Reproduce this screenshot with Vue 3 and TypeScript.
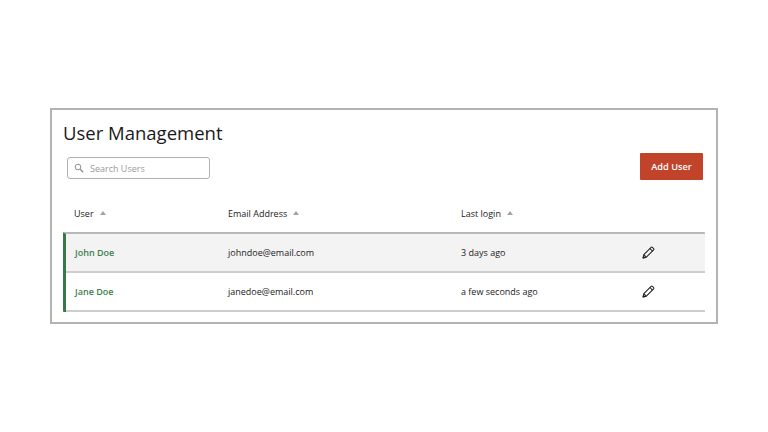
<script setup lang="ts">
interface User { name: string; email: string; login: string }
const users: User[] = [
  { name: 'John Doe', email: 'johndoe@email.com', login: '3 days ago' },
  { name: 'Jane Doe', email: 'janedoe@email.com', login: 'a few seconds ago' },
]
const headers = [
  { label: 'User', cls: 'first' },
  { label: 'Email Address', cls: '' },
  { label: 'Last login', cls: '' },
]
</script>

<template>
  <div class="page">
    <section class="card">
      <h1 class="title">User Management</h1>
      <div class="toolbar">
        <label class="search">
          <svg class="search-icon" viewBox="0 0 12 12" width="10" height="10" fill="none" stroke="#8f8f8f" stroke-width="1.2">
            <circle cx="4.8" cy="4.8" r="3.4" />
            <path d="M7.4 7.4 11 11" stroke-width="1.6" />
          </svg>
          <span class="placeholder">Search Users</span>
        </label>
        <button class="add" type="button">Add User</button>
      </div>
      <div class="grid head">
        <div v-for="h in headers" :key="h.label" class="th" :class="h.cls">
          {{ h.label }}<span class="caret"></span>
        </div>
        <div></div>
      </div>
      <div class="rows">
        <div v-for="(u, i) in users" :key="u.email" class="grid row" :class="{ shaded: i === 0 }">
          <div class="name">{{ u.name }}</div>
          <div>{{ u.email }}</div>
          <div>{{ u.login }}</div>
          <div class="action">
            <svg viewBox="0 0 14 14" width="13" height="13" fill="none" stroke="#1f1f1f" stroke-width="1.1" stroke-linejoin="round">
              <path d="M1.2 12.8 2 9.3 9.8 1.5a1 1 0 0 1 1.4 0l1.3 1.3a1 1 0 0 1 0 1.4L4.7 12Z" />
              <path d="M8.6 2.7 11.3 5.4" />
              <path d="M2 9.3 4.7 12" />
              <path d="M1.2 12.8 2.9 12.4 1.6 11.1Z" fill="#1f1f1f" />
            </svg>
          </div>
        </div>
      </div>
    </section>
  </div>
</template>

<style>
html, body { margin: 0; background: #fff; }
</style>

<style scoped>
.page {
  width: 768px;
  height: 432px;
  box-sizing: border-box;
  padding: 108px 50px 0;
  font-family: "Open Sans", "Noto Sans", sans-serif;
  color: #222;
  overflow: hidden;
}
.card {
  box-sizing: border-box;
  width: 668px;
  height: 216px;
  border: 2px solid #b4b4b4;
  padding: 9px 11px 0;
  background: #fff;
}
.title {
  margin: 0;
  font-size: 18.5px;
  line-height: 27px;
  font-weight: 400;
  color: #1a1a1a;
}
.toolbar {
  display: flex;
  justify-content: space-between;
  align-items: center;
  margin-top: 5px;
  padding: 0 2px 0 4px;
  height: 31px;
}
.search {
  box-sizing: border-box;
  width: 143px;
  height: 22px;
  border: 1px solid #b0b0b0;
  border-radius: 3px;
  display: flex;
  align-items: center;
  gap: 6px;
  padding-left: 6px;
  margin-top: 3px;
}
.search-icon { flex: none; }
.placeholder {
  font-size: 9px;
  color: #9a9a9a;
}
.add {
  width: 63px;
  height: 27px;
  border: 0;
  border-radius: 1px;
  background: #c0432a;
  color: #fff;
  font: 600 9.2px "Open Sans", sans-serif;
  padding: 0;
}
.grid {
  display: grid;
  grid-template-columns: 165px 233px 181px 63px;
  align-items: center;
  font-size: 9px;
}
.head {
  height: 38px;
  margin-top: 12px;
  color: #222;
}
.th.first { padding-left: 11px; }
.caret {
  display: inline-block;
  margin-left: 6px;
  vertical-align: 2px;
  border-left: 3.5px solid transparent;
  border-right: 3.5px solid transparent;
  border-bottom: 4px solid #a3a3a3;
}
.rows {
  border-top: 2px solid #b8b8b8;
  border-left: 3px solid #357a45;
  border-radius: 1px;
}
.row {
  grid-template-columns: 162px 233px 181px 63px;
  height: 37px;
  border-bottom: 2px solid #cdcdcd;
}
.row.shaded { background: #f3f3f3; }
.name {
  padding-left: 9px;
  color: #3d7f4e;
  font-weight: 600;
}
.action {
  display: flex;
}
</style>
